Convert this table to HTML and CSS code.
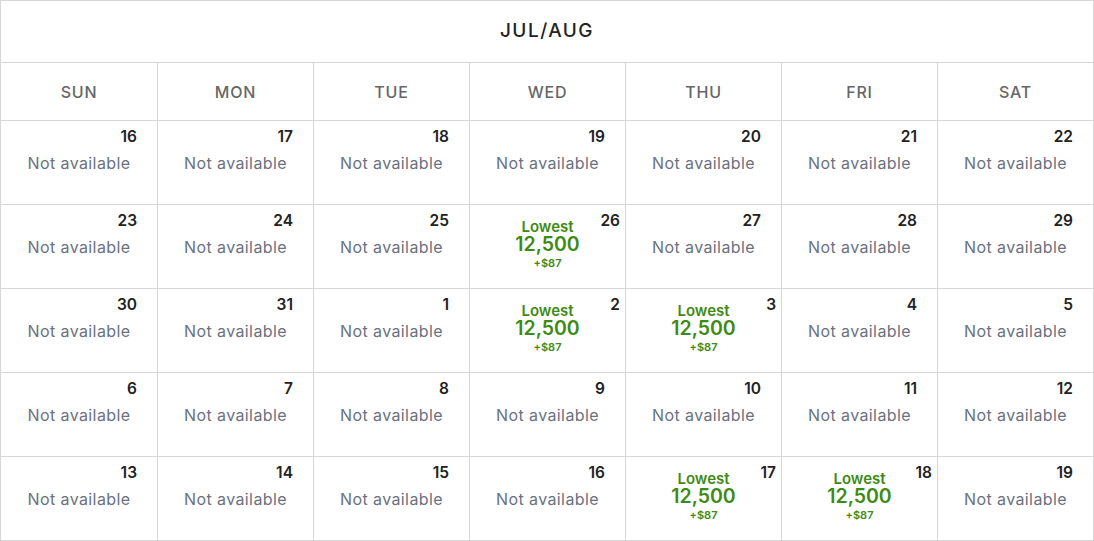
FILE: index.html
```html
<!DOCTYPE html>
<html>
<head>
<meta charset="utf-8">
<link rel="stylesheet" href="styles.css">
</head>
<body>
<div class="cal">
  <div class="title">JUL/AUG</div>
  <div class="grid">
    <div class="dow">SUN</div><div class="dow">MON</div><div class="dow">TUE</div><div class="dow">WED</div><div class="dow">THU</div><div class="dow">FRI</div><div class="dow">SAT</div>

    <div class="cell"><div class="num">16</div><div class="na">Not available</div></div>
    <div class="cell"><div class="num">17</div><div class="na">Not available</div></div>
    <div class="cell"><div class="num">18</div><div class="na">Not available</div></div>
    <div class="cell"><div class="num">19</div><div class="na">Not available</div></div>
    <div class="cell"><div class="num">20</div><div class="na">Not available</div></div>
    <div class="cell"><div class="num">21</div><div class="na">Not available</div></div>
    <div class="cell"><div class="num">22</div><div class="na">Not available</div></div>

    <div class="cell"><div class="num">23</div><div class="na">Not available</div></div>
    <div class="cell"><div class="num">24</div><div class="na">Not available</div></div>
    <div class="cell"><div class="num">25</div><div class="na">Not available</div></div>
    <div class="cell low"><div class="num">26</div><div class="price"><div class="lbl">Lowest</div><div class="pts">12,500</div><div class="fee">+$87</div></div></div>
    <div class="cell"><div class="num">27</div><div class="na">Not available</div></div>
    <div class="cell"><div class="num">28</div><div class="na">Not available</div></div>
    <div class="cell"><div class="num">29</div><div class="na">Not available</div></div>

    <div class="cell"><div class="num">30</div><div class="na">Not available</div></div>
    <div class="cell"><div class="num">31</div><div class="na">Not available</div></div>
    <div class="cell"><div class="num">1</div><div class="na">Not available</div></div>
    <div class="cell low"><div class="num">2</div><div class="price"><div class="lbl">Lowest</div><div class="pts">12,500</div><div class="fee">+$87</div></div></div>
    <div class="cell low"><div class="num">3</div><div class="price"><div class="lbl">Lowest</div><div class="pts">12,500</div><div class="fee">+$87</div></div></div>
    <div class="cell"><div class="num">4</div><div class="na">Not available</div></div>
    <div class="cell"><div class="num">5</div><div class="na">Not available</div></div>

    <div class="cell"><div class="num">6</div><div class="na">Not available</div></div>
    <div class="cell"><div class="num">7</div><div class="na">Not available</div></div>
    <div class="cell"><div class="num">8</div><div class="na">Not available</div></div>
    <div class="cell"><div class="num">9</div><div class="na">Not available</div></div>
    <div class="cell"><div class="num">10</div><div class="na">Not available</div></div>
    <div class="cell"><div class="num">11</div><div class="na">Not available</div></div>
    <div class="cell"><div class="num">12</div><div class="na">Not available</div></div>

    <div class="cell"><div class="num">13</div><div class="na">Not available</div></div>
    <div class="cell"><div class="num">14</div><div class="na">Not available</div></div>
    <div class="cell"><div class="num">15</div><div class="na">Not available</div></div>
    <div class="cell"><div class="num">16</div><div class="na">Not available</div></div>
    <div class="cell low"><div class="num">17</div><div class="price"><div class="lbl">Lowest</div><div class="pts">12,500</div><div class="fee">+$87</div></div></div>
    <div class="cell low"><div class="num">18</div><div class="price"><div class="lbl">Lowest</div><div class="pts">12,500</div><div class="fee">+$87</div></div></div>
    <div class="cell"><div class="num">19</div><div class="na">Not available</div></div>
  </div>
</div>
</body>
</html>
```

FILE: styles.css
```css
* { box-sizing: border-box; }
html, body { margin: 0; padding: 0; background: #fff; }
body { font-family: Inter, "Noto Sans", sans-serif; }

.cal {
  width: 1094px;
  height: 541px;
  border: 1px solid #d6d6d6;
}

.title {
  height: 62px;
  border-bottom: 1px solid #d6d6d6;
  display: flex;
  align-items: center;
  justify-content: center;
  font-size: 19px;
  font-weight: 500;
  letter-spacing: 1.5px;
  color: #222;
  padding-bottom: 2px;
}

.grid {
  display: grid;
  grid-template-columns: 156px 156px 156px 156px 156px 156px 156px;
  grid-template-rows: 58px repeat(5, 84px);
}

.dow {
  border-bottom: 1px solid #d6d6d6;
  border-left: 1px solid #d6d6d6;
  display: flex;
  align-items: center;
  justify-content: center;
  font-size: 16px;
  font-weight: 500;
  letter-spacing: 0.8px;
  color: #666;
}
.dow:nth-child(7n+1) { border-left: none; }

.cell {
  position: relative;
  border-bottom: 1px solid #d6d6d6;
  border-left: 1px solid #d6d6d6;
  padding: 6px 20px 0 0;
  display: flex;
  flex-direction: column;
}
.cell:nth-child(7n+1) { border-left: none; }
.grid > .cell:nth-last-child(-n+7) { border-bottom: none; }

.num {
  align-self: flex-end;
  font-size: 15.5px;
  line-height: 20px;
  font-weight: 600;
  color: #222;
}

.na {
  margin-top: 6px;
  padding-left: 20px;
  text-align: center;
  font-size: 16px;
  line-height: 20px;
  color: #6b7180;
  letter-spacing: 0.4px;
}

.low .num {
  position: absolute;
  top: 6px;
  right: 5px;
}

.price {
  padding-left: 20px;
  padding-top: 8px;
  text-align: center;
  color: #3d8b12;
  font-weight: 600;
}
.lbl { font-size: 15px; line-height: 16px; }
.pts { font-size: 19.5px; line-height: 19px; letter-spacing: 0; }
.fee { font-size: 11px; line-height: 14px; margin-top: 2px; }
```
